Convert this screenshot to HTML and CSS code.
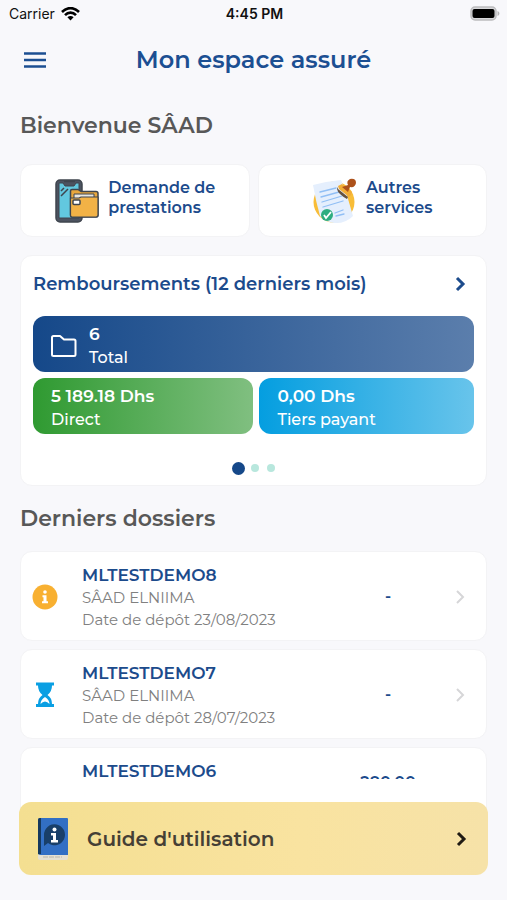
FILE: index.html
```html
<!DOCTYPE html>
<html lang="fr">
<head>
<meta charset="utf-8">
<meta name="viewport" content="width=device-width, initial-scale=1">
<title>Mon espace assuré</title>
<link rel="stylesheet" href="styles.css">
</head>
<body>
<div class="status">
  <div class="carrier">Carrier
    <svg width="19" height="14" viewBox="0 0 19 14" fill="none" stroke="#000" stroke-width="2.6"><path d="M1 5C6-.2 13-.2 18 5M4 8.1c3.200-3.300 7.800-3.300 11 0"/><path d="M6.400 10.300c1.800-1.700 4.400-1.700 6.200 0L9.500 13.500z" fill="#000" stroke="none"/></svg>
  </div>
  <div class="clock">4:45 PM</div>
  <svg class="battery" width="30" height="15" viewBox="0 0 30 15"><rect x="1" y="1" width="25" height="13" rx="4" fill="#d9d9db" stroke="#bcbcbe" stroke-width="1.500"/><rect x="2.500" y="3" width="22" height="9" rx="2"/><path d="M27.500 5c2.500 1 2.500 4 0 5z" fill="#b5b5b7"/></svg>
</div>
<header class="topbar">
  <button class="menu" aria-label="Menu"><svg width="24" height="18" viewBox="0 0 24 18" stroke="#1c4f92" stroke-width="2.4"><path d="M1 2.500h22M1 9h22M1 15.500h22"/></svg></button>
  <h1>Mon espace assuré</h1>
</header>
<main>
  <h2 class="welcome">Bienvenue SÂAD</h2>
  <nav class="shortcuts">
    <a class="card shortcut" href="#demande">
      <svg width="46" height="46" viewBox="0 0 46 46" stroke="#3f454e" stroke-width="1.500" stroke-linejoin="round">
        <rect x="2" y="2" width="26" height="42" rx="4" fill="#4c5360"/>
        <path d="M5 5h4l2 3h9l2-3h3v35H5z" fill="#62c8df" stroke-width="1"/>
        <path d="M10 3.500h11M7 18l7-7M7 13l3-3" fill="none"/>
        <path d="M16.500 13q0-1.500 1.500-1.500h6l3 2h15q2 0 2 2V37q0 2-2 2H18q-1.500 0-1.500-2z" fill="#e8a73d"/>
        <path d="M20 20v-4h20v4" fill="#e9e7df" stroke-width="1"/><path d="M16.500 20H25l2-1h17v18q0 2-2 2H18q-1.500 0-1.500-2z" fill="#f2b246" stroke-width="1.200"/>
        <rect x="19" y="22" width="7" height="4.500" rx="1" fill="#fff"/>
      </svg>
      <span>Demande de<br>prestations</span>
    </a>
    <a class="card shortcut" href="#services">
      <svg width="46" height="46" viewBox="0 0 46 46" fill="none">
        <circle cx="22" cy="24" r="20.500" fill="#f8bd38"/>
        <path d="M1 7 14 4l15-2 5 12 7 24q-8 8-19 7-8-1-14-7Q4 24 1 7z" fill="#e5effd"/>
        <g stroke="#91bff5" stroke-width="1.300" stroke-linecap="round"><path d="m8 14 16-4M9 19l18-5M10 24l20-6M11 29l20-6M23 35l8-3M24 38l8-2"/></g>
        <path d="m26 8 4-2 10 8-1 3-2 2-10-8z" fill="#f2ad37"/><path d="m25 9 1 2 10 8-1 2q-9-5-10-10z" fill="#65513f"/>
        <path d="m30 9 6-2q-2-4 2-6 6-1 6 4-1 5-6 4l-2 5z" fill="#ad521b"/>
        <circle cx="15" cy="37" r="6" fill="#2fad80"/><path d="m12 37 2 3 5-6" stroke="#fff" stroke-width="1.800"/>
      </svg>
      <span>Autres<br>services</span>
    </a>
  </nav>
  <section class="card refunds">
    <a class="refund-head" href="#remboursements"><span>Remboursements (12 derniers mois)</span>
      <svg width="12" height="16" viewBox="0 0 12 16"><path d="m3 2 6 6-6 6"/></svg></a>
    <div class="tiles">
      <div class="tile total">
        <svg width="26" height="24" viewBox="0 0 26 24" fill="none" stroke="#fff" stroke-width="2" stroke-linejoin="round"><path d="M1 3.500Q1 2 2.500 2H9l4 3.500h10Q24.500 5.500 24.500 7v13.500q0 1.500-1.500 1.500H2.500Q1 22 1 20.500z"/></svg>
        <div><strong>6</strong><span>Total</span></div>
      </div>
      <div class="pair">
        <div class="tile direct"><div><strong>5 189.18 Dhs</strong><span>Direct</span></div></div>
        <div class="tile third"><div><strong>0,00 Dhs</strong><span>Tiers payant</span></div></div>
      </div>
    </div>
    <div class="dots"><i class="on"></i><i></i><i></i></div>
  </section>
  <h2 class="recent">Derniers dossiers</h2>
  <div class="files">
    <a class="card file" href="#8">
      <svg width="26" height="26" viewBox="0 0 26 26"><circle cx="13" cy="13" r="12.500" fill="#f8b031"/><g fill="#fff"><circle cx="13" cy="8" r="1.800"/><path d="M10.500 11.200h4v6h1.500v2h-6v-2h1.500v-4h-1z"/></g></svg>
      <div class="info"><b>MLTESTDEMO8</b><span>SÂAD ELNIIMA</span><span>Date de dépôt 23/08/2023</span></div>
      <b class="amount">-</b>
      <svg class="go" width="12" height="16" viewBox="0 0 12 16"><path d="m3 2 6 6-6 6"/></svg>
    </a>
    <a class="card file" href="#7">
      <svg width="26" height="26" viewBox="0 0 26 26"><path d="M4 .5h18v3h-2q0 6-4.500 9.500Q20 16 20 22h2v3H4v-3h2q0-6 4.500-9Q6 9.500 6 3.500H4z" fill="#0a9fe3"/><path d="M8.500 22q0-4 4.500-7 4.500 3 4.500 7-4.500-5-9 0z" fill="#fff"/></svg>
      <div class="info"><b>MLTESTDEMO7</b><span>SÂAD ELNIIMA</span><span>Date de dépôt 28/07/2023</span></div>
      <b class="amount">-</b>
      <svg class="go" width="12" height="16" viewBox="0 0 12 16"><path d="m3 2 6 6-6 6"/></svg>
    </a>
    <a class="card file partial" href="#6">
      <div class="info"><b>MLTESTDEMO6</b></div>
      <b class="amount">280,00</b>
    </a>
  </div>
</main>
<a class="guide" href="#guide">
  <svg width="32" height="44" viewBox="0 0 32 44"><path d="M1 38h30v3q0 2-2 2H3q-2 0-2-2z" fill="#e5e0d2"/><path d="M6 40h19" stroke="#b9b6ad" stroke-dasharray="5 1"/><path d="M1 3q0-2 2-2h27q1 0 1 1v36H3q-2 0-2-2z" fill="#326fc4"/><path d="M1 3q0-2 2-2h1v36H1z" fill="#16395e"/><path d="M7 29V18a10.500 10.500 0 1 1 4 8z" fill="#193f69"/><g fill="#fff"><circle cx="17.500" cy="12.500" r="2"/><path d="M14 16h5v7h2v2.500h-7V23h2v-4.500h-2z"/></g></svg>
  <span>Guide d'utilisation</span>
  <svg class="go" width="12" height="16" viewBox="0 0 12 16"><path d="m3 2 6 6-6 6"/></svg>
</a>
</body>
</html>
```
FILE: styles.css
```css
* { box-sizing: border-box; }
body { margin: 0; min-height: 100vh; overflow: hidden; background: #f8f8fb; color: #585858; font-family: Montserrat, Inter, sans-serif; }
a { color: #1c4b8c; text-decoration: none; }
h1, h2 { margin: 0; font-weight: 600; }
svg { flex: none; display: block; }
.status { display: grid; grid-template-columns: 1fr auto 1fr; align-items: center; height: 27px; padding: 0 7px 0 9px; color: #111; font-family: Inter, sans-serif; font-size: 14px; }
.carrier { display: flex; align-items: center; gap: 6px; }
.clock { font-weight: 600; }
.battery { justify-self: end; }
.topbar { display: grid; grid-template-columns: 24px 1fr 24px; align-items: center; height: 65px; padding: 0 23px; }
.menu { padding: 0; border: 0; background: none; }
h1 { color: #1c4f92; font-size: 24px; text-align: center; white-space: nowrap; }
main { padding: 0 20px; }
h2 { font-size: 22px; line-height: 32px; }
.welcome { padding: 18px 0 22px; }
.card { border: 1px solid #f3f3f5; border-radius: 12px; background: #fff; }
.shortcuts { display: grid; grid-template-columns: 1fr 1fr; gap: 8px; }
.shortcut { display: flex; align-items: center; justify-content: center; gap: 8px; height: 73px; font-size: 16px; font-weight: 600; line-height: 20px; }
.shortcut span { padding-bottom: 5px; }
.refunds { margin-top: 18px; padding: 12px 12px 10px; }
.refund-head { display: flex; align-items: center; justify-content: space-between; padding-right: 8px; font-size: 18px; font-weight: 600; line-height: 32px; white-space: nowrap; }
.refund-head path, .go path { fill: none; stroke: #1c4b8c; stroke-width: 3; }
.tiles { display: grid; gap: 6px; margin-top: 16px; }
.pair { display: grid; grid-template-columns: 221fr 215fr; gap: 6px; }
.tile { display: flex; align-items: center; gap: 12px; height: 56px; padding: 3px 18px 0; border-radius: 12px; color: #fff; font-size: 16px; line-height: 24px; }
.tile strong, .tile span { display: block; font-weight: 500; }
.tile strong { font-size: 17px; font-weight: 600; }
.total { background: linear-gradient(90deg, #154889, #5b7eac); }
.direct { background: linear-gradient(90deg, #2f9a31, #80bf80); }
.third { background: linear-gradient(90deg, #049ee0, #68c4eb); }
.dots { display: flex; align-items: center; justify-content: center; gap: 8px; height: 14px; margin-top: 27px; }
.dots i { width: 8px; height: 8px; border-radius: 50%; background: #b8e7dd; }
.dots .on { width: 13px; height: 13px; margin-right: -2px; background: #154889; }
.recent { padding: 17px 0 16px; }
.files { display: grid; gap: 8px; }
.file { display: grid; grid-template-columns: 26px 1fr 96px 12px; align-items: center; height: 90px; padding: 1px 20px 0 11px; }
.info { padding-left: 24px; color: #808080; font-size: 15px; line-height: 22px; }
.info b, .info span { display: block; }
.info b { color: #1c4b8c; font-size: 17px; font-weight: 600; line-height: 24px; }
.amount { padding-right: 36px; color: #1c4b8c; font-size: 16px; font-weight: 600; text-align: center; white-space: nowrap; }
.file .go path { stroke: #d6d6d8; stroke-width: 2; }
.partial { align-items: start; padding-top: 11px; }
.partial .info { grid-column: 2; }
.partial .amount { height: 3px; margin-top: 17px; overflow: hidden; line-height: 14px; }
.guide { position: fixed; right: 19px; bottom: 25px; left: 19px; display: flex; align-items: center; gap: 18px; height: 73px; padding: 0 21px 0 18px; border-radius: 12px; background: linear-gradient(90deg, #f4df91, #f9e3a0 60%, #f6e2a8); color: #453f35; font-size: 20px; font-weight: 600; }
.guide span { flex: 1; }
.guide .go path { stroke: #201b14; }
```
